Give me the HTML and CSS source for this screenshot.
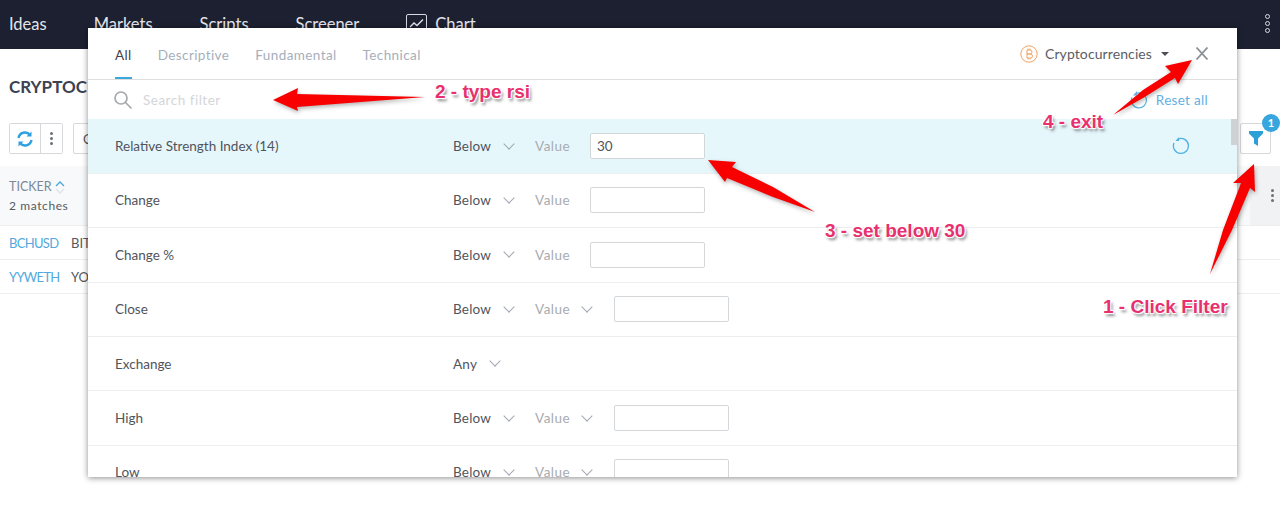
FILE: index.html
```html
<!DOCTYPE html>
<html lang="en">
<head>
  <meta charset="UTF-8">
  <title>Crypto Screener</title>
  <link rel="stylesheet" href="styles.css">
</head>
<body>
  <nav class="topbar">
    <a class="nav-link">Ideas</a>
    <a class="nav-link">Markets</a>
    <a class="nav-link">Scripts</a>
    <a class="nav-link">Screener</a>
    <a class="nav-link nav-chart">
      <svg width="21" height="19" viewBox="0 0 21 19" fill="none">
        <rect x="0.5" y="0.5" width="20" height="18" rx="1.5" stroke="#d5d8e0"/>
        <path d="M4 13l4-4 3 2.500 6-6" stroke="#e4e6ec" stroke-width="1.300"/>
      </svg>
      Chart
    </a>
    <span class="nav-dots"><i></i><i></i><i></i></span>
  </nav>

  <main class="page">
    <h1 class="page-title">CRYPTOCURRENCY</h1>

    <div class="toolbar">
      <div class="btn-group">
        <button class="tool-btn refresh-btn">
          <svg width="18" height="18" viewBox="0 0 18 18" fill="none" stroke="#2e9fe0" stroke-width="2.400">
            <path d="M2.500 8a6.500 6.500 0 0 1 11.500-3"/>
            <path d="M15.500 10a6.500 6.500 0 0 1-11.500 3"/>
            <path d="M15.500 1.500v5h-5z" fill="#2e9fe0" stroke="none"/>
            <path d="M2.500 16.500v-5h5z" fill="#2e9fe0" stroke="none"/>
          </svg>
        </button>
        <button class="tool-btn more-btn"><span class="dots"><i></i><i></i><i></i></span></button>
      </div>
      <button class="tool-btn column-btn">C</button>
      <button class="tool-btn filter-btn">
        <svg width="14" height="15" viewBox="0 0 14 15"><path d="M0 0h14v2.500L9 7.500V15L5 12.500V7.500L0 2.500z" fill="#2a9fd8"/></svg>
        <span class="badge">1</span>
      </button>
    </div>

    <div class="table-head">
      <div class="ticker-head">
        <div class="ticker-title">TICKER
          <svg width="10" height="14" viewBox="0 0 10 14" fill="none" stroke-width="1.300">
            <path d="M1 6l4-4 4 4" stroke="#4ba6dc"/>
            <path d="M1 9l4 4 4-4" stroke="#dfe3e8"/>
          </svg>
        </div>
        <div class="ticker-count">2 matches</div>
      </div>
      <div class="head-more"><span class="dots"><i></i><i></i><i></i></span></div>
    </div>
    <div class="table-row"><a class="symbol">BCHUSD</a><span class="coin">BITCOIN</span></div>
    <div class="table-row"><a class="symbol">YYWETH</a><span class="coin">YOYOW</span></div>
  </main>

  <!-- filter dialog -->
  <section class="modal">
    <header class="modal-tabs">
      <a class="tab tab-active">All</a>
      <a class="tab">Descriptive</a>
      <a class="tab">Fundamental</a>
      <a class="tab">Technical</a>
      <div class="market">
        <svg width="18" height="18" viewBox="0 0 18 18" fill="none" stroke="#f0a365">
          <circle cx="9" cy="9" r="8.200"/>
          <path d="M7 5h3a2 2 0 0 1 0 4H7h3.500a2 2 0 0 1 0 4H7zM8 3.500V5M10 3.500V5M8 13v1.500M10 13v1.500" stroke-width="1"/>
        </svg>
        <span class="market-name">Cryptocurrencies</span>
        <span class="caret"></span>
      </div>
      <svg class="close-icon" width="12" height="13" viewBox="0 0 12 13" stroke="#8d9095" stroke-width="1.800"><path d="M0.500 0.500l11 12M11.500 0.500l-11 12"/></svg>
    </header>

    <div class="search-row">
      <svg width="20" height="20" viewBox="0 0 20 20" fill="none" stroke="#a6a8ab" stroke-width="1.700">
        <circle cx="8" cy="8" r="6"/>
        <path d="M12.500 12.500l6 6"/>
      </svg>
      <span class="search-text">Search filter</span>
      <span class="reset-all">
        <svg width="18" height="18" viewBox="0 0 18 18" fill="none" stroke="#5fb2e3" stroke-width="1.200"><path d="M6 2.500a7.500 7.500 0 1 1-4 4"/><path d="M7 0v4.500H3z" fill="#5fb2e3" stroke="none"/></svg>
        Reset all
      </span>
    </div>

    <div class="filter-list">
      <div class="filter-row row-on">
        <span class="filter-name">Relative Strength Index (14)</span>
        <span class="op">Below <b class="chev"></b></span>
        <span class="val">Value</span>
        <span class="box">30</span>
        <svg class="row-reset" width="18" height="18" viewBox="0 0 18 18" fill="none" stroke="#4fb0e4" stroke-width="1.300"><path d="M6 2a7.500 7.500 0 1 1-4 4"/><path d="M7 0v4H3.500z" fill="#4fb0e4" stroke="none"/></svg>
      </div>
      <div class="filter-row">
        <span class="filter-name">Change</span>
        <span class="op">Below <b class="chev"></b></span>
        <span class="val">Value</span>
        <span class="box"></span>
      </div>
      <div class="filter-row">
        <span class="filter-name">Change %</span>
        <span class="op">Below <b class="chev"></b></span>
        <span class="val">Value</span>
        <span class="box"></span>
      </div>
      <div class="filter-row">
        <span class="filter-name">Close</span>
        <span class="op">Below <b class="chev"></b></span>
        <span class="val val-drop">Value <b class="chev"></b></span>
        <span class="box"></span>
      </div>
      <div class="filter-row">
        <span class="filter-name">Exchange</span>
        <span class="op">Any <b class="chev"></b></span>
      </div>
      <div class="filter-row">
        <span class="filter-name">High</span>
        <span class="op">Below <b class="chev"></b></span>
        <span class="val val-drop">Value <b class="chev"></b></span>
        <span class="box"></span>
      </div>
      <div class="filter-row">
        <span class="filter-name">Low</span>
        <span class="op">Below <b class="chev"></b></span>
        <span class="val val-drop">Value <b class="chev"></b></span>
        <span class="box"></span>
      </div>
      <div class="scroll-thumb"></div>
    </div>
  </section>

  <!-- red arrows drawn on top of the screenshot -->
  <svg class="arrows" width="1280" height="531" viewBox="0 0 1280 531" fill="#f80000">
    <polygon points="273,100 298,88 297,94 425,97 297,107 298,111"/>
    <polygon points="708,160 736,162 732,167 773,187 815,212 773,197 727,178 725,182"/>
    <polygon points="1254,164 1255,192 1250,188 1232,230 1210,274 1223,230 1241,183 1233,183"/>
    <polygon points="1192,60 1165,66 1171,72 1143,90 1113,115 1143,98 1175,78 1178,84"/>
  </svg>
  <span class="note note-type">2 - type rsi</span>
  <span class="note note-set">3 - set below 30</span>
  <span class="note note-exit">4 - exit</span>
  <span class="note note-click">1 - Click Filter</span>
</body>
</html>
```

FILE: styles.css
```css
body, html {
  margin: 0;
  padding: 0;
  height: 100%;
  background-color: white;
  font-family: "Lato", "Noto Sans", sans-serif;
  overflow: hidden;
}

.topbar {
  height: 49px;
  background: #1c2030;
  display: flex;
  align-items: center;
  gap: 47px;
  padding: 0 9px 2px;
  box-sizing: border-box;
  color: #e3e5ec;
  font-size: 16.500px;
}

.nav-chart {
  display: flex;
  align-items: center;
  gap: 8px;
}

.nav-dots {
  margin-left: auto;
  margin-right: 1px;
  display: flex;
  flex-direction: column;
  gap: 2px;
}

.nav-dots i {
  display: block;
  width: 3px;
  height: 3px;
  border: 1px solid #d8dbe2;
  border-radius: 50%;
}

.page-title {
  margin: 28px 0 0 9px;
  font-size: 17px;
  line-height: 20px;
  font-weight: bold;
  color: #3c4250;
}

.toolbar {
  display: flex;
  margin: 26px 9px 0;
  height: 31px;
}

.btn-group {
  display: flex;
  border: 1px solid #d6d8dc;
  border-radius: 2px;
}

.tool-btn {
  background: white;
  border: none;
  padding: 0;
  display: flex;
  align-items: center;
  justify-content: center;
  font-family: inherit;
  font-size: 13px;
  color: #555;
}

.refresh-btn {
  width: 31px;
  border-right: 1px solid #d6d8dc;
}

.more-btn {
  width: 21px;
}

.dots {
  display: flex;
  flex-direction: column;
  gap: 2px;
}

.dots i {
  display: block;
  width: 3px;
  height: 3px;
  border-radius: 50%;
  background: #6c7078;
}

.column-btn {
  margin-left: 10px;
  width: 60px;
  border: 1px solid #d6d8dc;
  border-radius: 2px;
  justify-content: flex-start;
  padding-left: 9px;
}

.filter-btn {
  margin-left: auto;
  width: 31px;
  border: 1px solid #d6d8dc;
  border-radius: 2px;
  position: relative;
}

.badge {
  position: absolute;
  top: -10px;
  right: -10px;
  width: 18px;
  height: 18px;
  border-radius: 50%;
  background: #37a6de;
  color: white;
  font-size: 11px;
  font-weight: bold;
  line-height: 18px;
  text-align: center;
}

.table-head {
  margin-top: 12px;
  height: 59px;
  background: #f8f9fa;
  display: flex;
  justify-content: space-between;
  border-bottom: 1px solid #eceef0;
}

.ticker-head {
  padding: 13px 0 0 9px;
}

.ticker-title {
  display: flex;
  align-items: center;
  gap: 3px;
  font-size: 12.500px;
  line-height: 16px;
  color: #7a8899;
}

.ticker-count {
  margin-top: 3px;
  font-size: 12px;
  line-height: 16px;
  letter-spacing: 0.6px;
  color: #555a60;
}

.head-more {
  width: 30px;
  box-sizing: border-box;
  padding-right: 6px;
  background: #f1f2f4;
  display: flex;
  align-items: center;
  justify-content: flex-end;
}

.table-row {
  height: 33px;
  display: flex;
  align-items: center;
  padding-left: 9px;
  border-bottom: 1px solid #eceef0;
  font-size: 13px;
}

.symbol {
  width: 62px;
  letter-spacing: -0.7px;
  color: #53a9dc;
}

.coin {
  color: #555a60;
}

.modal {
  position: absolute;
  left: 88px;
  top: 28px;
  width: 1149px;
  height: 449px;
  background: white;
  box-shadow: 0 1px 6px rgba(0, 0, 0, 0.45);
  display: flex;
  flex-direction: column;
  overflow: hidden;
}

.modal-tabs {
  height: 51px;
  flex: none;
  display: flex;
  align-items: center;
  gap: 26px;
  padding: 0 29px 0 27px;
  border-bottom: 1px solid #dcdee0;
  font-size: 13.500px;
  letter-spacing: 0.4px;
}

.tab {
  color: #a5afbc;
  height: 51px;
  line-height: 55px;
  box-sizing: border-box;
}

.tab-active {
  color: #40444c;
  border-bottom: 2px solid #3ba9dc;
}

.market {
  margin-left: auto;
  display: flex;
  align-items: center;
  gap: 7px;
  color: #5a5e66;
  font-size: 14px;
  letter-spacing: 0.1px;
}

.caret {
  width: 0;
  height: 0;
  margin-left: 2px;
  border-left: 4px solid transparent;
  border-right: 4px solid transparent;
  border-top: 4px solid #4c4f55;
}

.close-icon {
  flex: none;
  margin-left: 1px;
}

.search-row {
  height: 39.400px;
  flex: none;
  display: flex;
  align-items: center;
  padding: 0 29px 0 25px;
  font-size: 13.500px;
}

.search-text {
  margin-left: 10px;
  color: #d4d6d8;
  letter-spacing: 0.5px;
}

.reset-all {
  margin-left: auto;
  display: flex;
  align-items: center;
  gap: 8px;
  color: #62b0e2;
  letter-spacing: 0.3px;
}

.filter-list {
  position: relative;
  flex: 1;
}

.filter-row {
  height: 54.400px;
  box-sizing: border-box;
  display: flex;
  align-items: center;
  padding-left: 27px;
  border-bottom: 1px solid #eceef0;
  font-size: 13.500px;
  color: #50545c;
}

.row-on {
  background: #e6f7fc;
}

.filter-name {
  width: 338px;
  flex: none;
}

.op {
  width: 82px;
  flex: none;
  display: flex;
  align-items: center;
  gap: 13px;
  letter-spacing: 0.2px;
}

.val {
  width: 55px;
  flex: none;
  color: #a8abb0;
  display: flex;
  align-items: center;
  gap: 12px;
  letter-spacing: 0.5px;
}

.val-drop {
  width: 79px;
}

.chev {
  width: 7px;
  height: 7px;
  margin: -5px 0 0 1px;
  border-right: 1.300px solid #a0a8b0;
  border-bottom: 1.300px solid #a0a8b0;
  transform: rotate(45deg);
}

.box {
  width: 115px;
  height: 26px;
  box-sizing: border-box;
  flex: none;
  background: white;
  border: 1px solid #d4d7da;
  border-radius: 2px;
  padding-left: 6px;
  line-height: 24px;
}

.row-reset {
  margin-left: 467px;
}

.scroll-thumb {
  position: absolute;
  top: 0;
  right: 0;
  width: 6px;
  height: 26px;
  background: #cfd2d4;
}

.arrows {
  position: absolute;
  left: 0;
  top: 0;
  pointer-events: none;
  filter: drop-shadow(1px 2px 2px rgba(0, 0, 0, 0.3));
}

.note {
  position: absolute;
  font-family: "Liberation Sans", sans-serif;
  font-weight: bold;
  font-size: 19px;
  line-height: 20px;
  color: #e8306e;
  white-space: nowrap;
  text-shadow: 0 0 1px white, 1px 1px 1px white, -1px -1px 1px white, 1px -1px 1px white, -1px 1px 1px white, 2px 3px 3px rgba(0, 0, 0, 0.5);
}

.note-type {
  left: 435px;
  top: 82px;
}

.note-set {
  left: 825px;
  top: 221px;
}

.note-exit {
  left: 1043px;
  top: 112px;
}

.note-click {
  left: 1103px;
  top: 297px;
}
```
